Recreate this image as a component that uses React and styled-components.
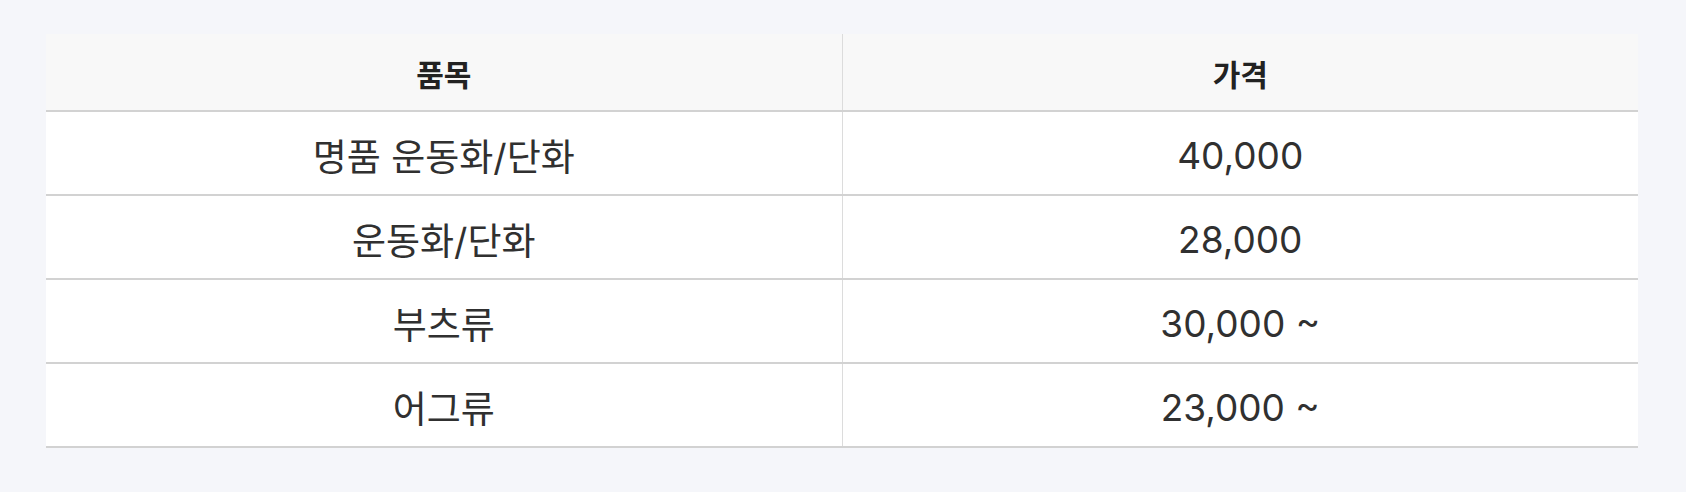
import styled, { createGlobalStyle } from 'styled-components';

const GlobalStyle = createGlobalStyle`
    html, body {
        margin: 0;
        padding: 0;
        background: #f5f6fa;
    }
    body {
        font-family: Inter, "Noto Sans CJK KR", sans-serif;
    }
`

const Page = styled.div`
    padding: 34px 48px 40px 46px;
`
const Table = styled.table`
    width: 100%;
    border-collapse: collapse;
    table-layout: fixed;
    background: #ffffff;
`
const HeadCell = styled.th`
    height: 77px;
    padding: 0;
    padding-top: 2px;
    box-sizing: border-box;
    background: #f8f8f8;
    font-size: 30px;
    font-weight: 700;
    color: #222222;
    text-align: center;
    border-bottom: 2px solid #d2d2d2;
    border-left: ${props => props.divided ? '1px solid #dcdcdc' : 'none'};
`
const Cell = styled.td`
    height: 78px;
    padding: 4px 0 0;
    font-size: 37px;
    font-weight: 400;
    color: #303030;
    text-align: center;
    border-bottom: 2px solid #d2d2d2;
    border-left: ${props => props.divided ? '1px solid #dcdcdc' : 'none'};
`

const prices = [
    { item: '명품 운동화/단화', price: '40,000' },
    { item: '운동화/단화', price: '28,000' },
    { item: '부츠류', price: '30,000 ~' },
    { item: '어그류', price: '23,000 ~' },
];

const App = () => {
    return (
        <Page>
            <GlobalStyle />
            <Table>
                <thead>
                    <tr>
                        <HeadCell>품목</HeadCell>
                        <HeadCell divided>가격</HeadCell>
                    </tr>
                </thead>
                <tbody>
                    {prices.map(row => (
                        <tr key={row.item}>
                            <Cell>{row.item}</Cell>
                            <Cell divided>{row.price}</Cell>
                        </tr>
                    ))}
                </tbody>
            </Table>
        </Page>
    )
}

export default App;
